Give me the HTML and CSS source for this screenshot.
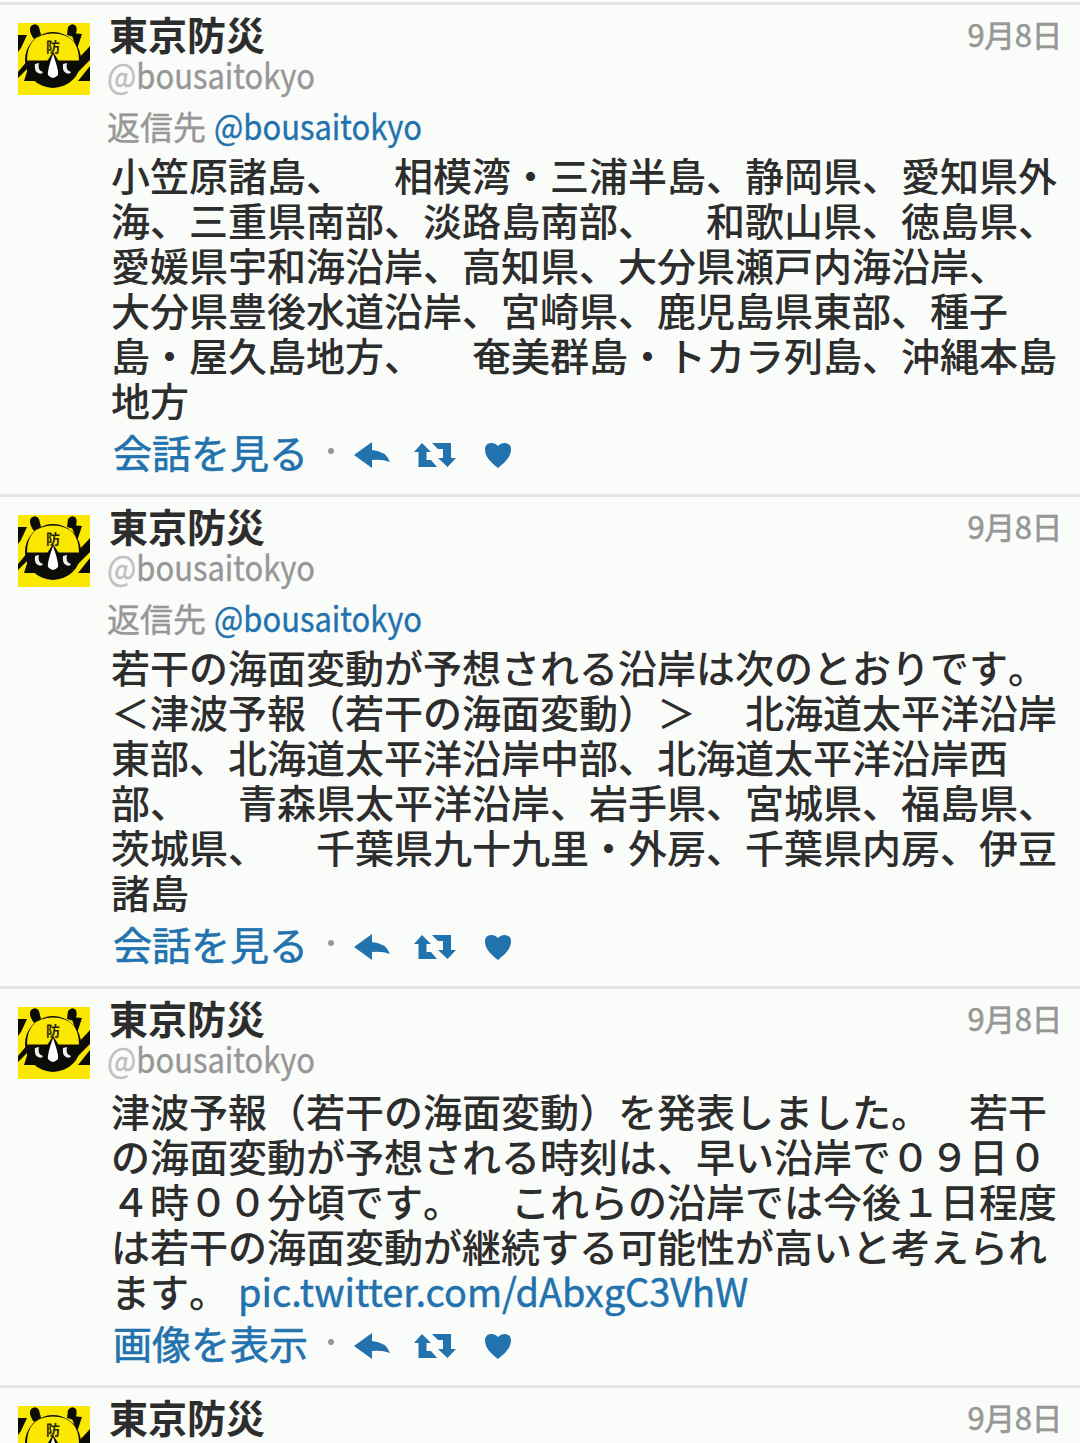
FILE: index.html
```html
<!DOCTYPE html>
<html lang="ja">
<head>
    <meta charset="UTF-8">
    <meta name="viewport" content="width=device-width, initial-scale=1.0">
    <title>東京防災</title>
    <link rel="stylesheet" href="styles.css">
</head>
<body>
    <!-- shared icons -->
    <svg class="defs" width="0" height="0">
        <symbol id="avatar" viewBox="0 0 72 72">
            <rect width="72" height="72" fill="#fbe800"/>
            <path d="M0 12H9L3 25L0 29ZM14 33L6 58H22L30 44ZM0 49L10 37V45L0 55ZM53 10L64 11L59 26ZM72 23V37L58 51L60 36ZM72 43V58H60Z" fill="#0b0b08"/>
            <path d="M13 3Q18 -1 21 4L23 12L16 16Q10 8 13 3ZM50 4Q54 -1 58 3Q60 9 56 14L49 12Z" fill="#0b0b08"/>
            <circle cx="35" cy="37" r="28" fill="#0b0b08"/>
            <path d="M9 37.500Q9 11 35 10.500Q61 11 61 37.500Z" fill="#fbe800"/>
            <path d="M28 40L35 29L42 40Z" fill="#0b0b08"/>
            <path d="M35 31Q41 48 40 52Q35 58 30 52Q29 48 35 31Z" fill="#fff"/>
            <path d="M17 41L21 40Q19 47 25 49Q24 52 20 50Q16 48 17 41ZM45 41L49 40Q47 47 53 49Q52 52 48 50Q44 48 45 41Z" fill="#eee"/>
            <text x="35" y="29" text-anchor="middle" class="kanji">防</text>
        </symbol>
        <symbol id="reply" viewBox="0 0 36 26">
            <path d="M0 13L18 0V8Q32 9 36 20Q28 17 18 18V26Z"/>
        </symbol>
        <symbol id="retweet" viewBox="0 0 42 26">
            <path d="M0 10L8 1L17 10H12.500V18H17L23 25H4.500V10ZM18 1H37V16H42L33.500 25L24 16H29V7H24Z"/>
        </symbol>
        <symbol id="heart" viewBox="0 0 28 26">
            <path d="M14 26C5 19 1 14 1 7C1 0 10 -1 14 4C18 -1 27 0 27 7C27 14 23 19 14 26Z"/>
        </symbol>
    </svg>

    <div class="timeline">
        <div class="tweet">
            <svg class="avatar"><use href="#avatar"/></svg>
            <div class="content">
                <div class="head">
                    <h2 class="name">東京防災</h2>
                    <span class="date">9月8日</span>
                </div>
                <div class="user"><span class="narrow"><span class="at">@</span>bousaitokyo</span></div>
                <div class="replyto">返信先 <a class="narrow">@bousaitokyo</a></div>
                <p class="text">小笠原諸島、　 相模湾・三浦半島、静岡県、愛知県外<br>海、三重県南部、淡路島南部、　 和歌山県、徳島県、<br>愛媛県宇和海沿岸、高知県、大分県瀬戸内海沿岸、<br>大分県豊後水道沿岸、宮崎県、鹿児島県東部、種子<br>島・屋久島地方、　 奄美群島・トカラ列島、沖縄本島<br>地方</p>
                <div class="actions">
                    <a class="more">会話を見る</a>
                    <span class="dot"></span>
                    <svg class="reply"><use href="#reply"/></svg>
                    <svg class="retweet"><use href="#retweet"/></svg>
                    <svg class="heart"><use href="#heart"/></svg>
                </div>
            </div>
        </div>

        <div class="tweet">
            <svg class="avatar"><use href="#avatar"/></svg>
            <div class="content">
                <div class="head">
                    <h2 class="name">東京防災</h2>
                    <span class="date">9月8日</span>
                </div>
                <div class="user"><span class="narrow"><span class="at">@</span>bousaitokyo</span></div>
                <div class="replyto">返信先 <a class="narrow">@bousaitokyo</a></div>
                <p class="text">若干の海面変動が予想される沿岸は次のとおりです。<br>＜津波予報（若干の海面変動）＞　 北海道太平洋沿岸<br>東部、北海道太平洋沿岸中部、北海道太平洋沿岸西<br>部、　 青森県太平洋沿岸、岩手県、宮城県、福島県、<br>茨城県、　 千葉県九十九里・外房、千葉県内房、伊豆<br>諸島</p>
                <div class="actions">
                    <a class="more">会話を見る</a>
                    <span class="dot"></span>
                    <svg class="reply"><use href="#reply"/></svg>
                    <svg class="retweet"><use href="#retweet"/></svg>
                    <svg class="heart"><use href="#heart"/></svg>
                </div>
            </div>
        </div>

        <div class="tweet">
            <svg class="avatar"><use href="#avatar"/></svg>
            <div class="content">
                <div class="head">
                    <h2 class="name">東京防災</h2>
                    <span class="date">9月8日</span>
                </div>
                <div class="user"><span class="narrow"><span class="at">@</span>bousaitokyo</span></div>
                <p class="text">津波予報（若干の海面変動）を発表しました。　若干<br>の海面変動が予想される時刻は、早い沿岸で０９日０<br>４時００分頃です。　 これらの沿岸では今後１日程度<br>は若干の海面変動が継続する可能性が高いと考えられ<br>ます。 <a class="narrow pic">pic.twitter.com/dAbxgC3VhW</a></p>
                <div class="actions">
                    <a class="more">画像を表示</a>
                    <span class="dot"></span>
                    <svg class="reply"><use href="#reply"/></svg>
                    <svg class="retweet"><use href="#retweet"/></svg>
                    <svg class="heart"><use href="#heart"/></svg>
                </div>
            </div>
        </div>

        <div class="tweet">
            <svg class="avatar"><use href="#avatar"/></svg>
            <div class="content">
                <div class="head">
                    <h2 class="name">東京防災</h2>
                    <span class="date">9月8日</span>
                </div>
            </div>
        </div>
    </div>
</body>
</html>
```
FILE: styles.css
```css
*{
    margin: 0;
    padding: 0;
    box-sizing: border-box;
}
body{
    background: #fafcf9;
    color: #2d2d2d;
    font-family: "Noto Sans CJK JP", sans-serif;
    text-spacing-trim: space-all;
    height: 1443px;
    overflow: hidden;
}
.defs{
    display: block;
}
.timeline{
    padding-top: 2px;
}
.tweet{
    display: flex;
    border-top: 3px solid #e4e6e4;
    padding: 4px 20px 0 18px;
}
.avatar{
    width: 72px;
    height: 72px;
    margin-top: 14px;
    flex-shrink: 0;
}
.kanji{
    font-size: 14px;
    font-weight: 700;
    fill: #2a2700;
}
.content{
    flex: 1;
    margin-left: 17px;
    white-space: nowrap;
}
.head{
    display: flex;
    justify-content: space-between;
    align-items: center;
    height: 48px;
    padding-left: 2px;
}
.name{
    font-size: 39px;
    font-weight: 700;
    line-height: 48px;
}
.date{
    font-size: 31px;
    letter-spacing: -0.5px;
    margin-right: -2px;
    color: #979797;
    -webkit-text-stroke: 0.6px;
}
.user{
    height: 38px;
    line-height: 36px;
    font-size: 34px;
    color: #979797;
    -webkit-text-stroke: 0.4px;
}
.at{
    color: #c0c0c0;
}
.narrow{
    display: inline-block;
    transform: scaleX(0.91);
    transform-origin: left;
}
.replyto{
    height: 52px;
    line-height: 48px;
    padding-top: 7px;
    font-size: 33px;
    color: #979797;
    -webkit-text-stroke: 0.4px;
}
.replyto a{
    font-size: 34px;
    margin-left: 1px;
}
a{
    color: #2272ae;
}
.text{
    margin-top: 9px;
    padding-left: 4px;
    font-size: 39px;
    font-weight: 500;
    line-height: 45px;
    word-spacing: 1.3px;
    font-kerning: none;
}
.replyto + .text{
    margin-top: 5px;
}
.pic{
    font-weight: 400;
    line-height: 40px;
    transform: scaleX(0.972);
    font-kerning: normal;
    -webkit-text-stroke: 0.5px;
}
.actions{
    display: flex;
    align-items: center;
    height: 72px;
    padding: 0 0 14px 6px;
}
.actions svg{
    fill: #2272ae;
    height: 26px;
    margin-top: 8px;
}
.more{
    font-size: 39px;
    font-weight: 400;
    line-height: 60px;
    -webkit-text-stroke: 0.6px;
}
.dot{
    width: 6px;
    height: 6px;
    margin: 0 20px 0 20px;
    border-radius: 50%;
    background: #979797;
}
.reply{
    width: 36px;
}
.retweet{
    width: 42px;
    margin-left: 24px;
}
.heart{
    width: 28px;
    margin-left: 28px;
}
```
